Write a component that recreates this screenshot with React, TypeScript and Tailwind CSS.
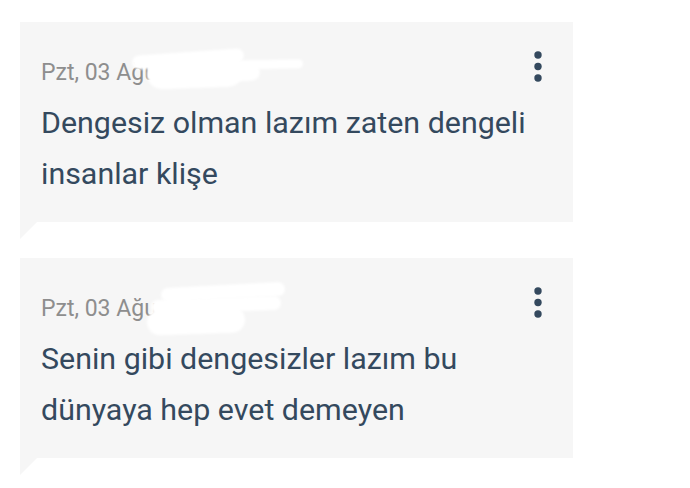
const font = { fontFamily: "Roboto, 'Noto Sans', sans-serif" };

const Dots = () => (
  <svg width="10" height="34" viewBox="0 0 10 34" className="shrink-0">
    <circle cx="5" cy="7" r="3.7" fill="#34495e" />
    <circle cx="5" cy="18.5" r="3.7" fill="#34495e" />
    <circle cx="5" cy="30" r="3.7" fill="#34495e" />
  </svg>
);

type Blob = { l: number; t: number; w: number; h: number; r: number };

const Scribble = ({ blobs }: { blobs: Blob[] }) => (
  <>
    {blobs.map((b, i) => (
      <div
        key={i}
        className="absolute rounded-full bg-white blur-[1px]"
        style={{ left: b.l, top: b.t, width: b.w, height: b.h, transform: `rotate(${b.r}deg)` }}
      />
    ))}
  </>
);

const Comment = ({ lines, blobs }: { lines: string[]; blobs: Blob[] }) => (
  <div className="relative h-[200px] w-[553px] bg-[#f6f6f6]">
    <div className="flex items-start justify-between pt-[26px] pr-[30px] pl-[21px]">
      <div className="mt-[10px] text-[23px] leading-[30px] text-[#8e8e8e]">Pzt, 03 Ağu</div>
      <Dots />
    </div>
    <div className="mt-[9px] pl-[21px] text-[30.4px] leading-[51px] text-[#34495e]">
      {lines.map((l) => (
        <div key={l}>{l}</div>
      ))}
    </div>
    <Scribble blobs={blobs} />
    <div className="absolute top-full left-0 h-[17px] w-[17px] bg-[#f6f6f6] [clip-path:polygon(0_0,100%_0,0_100%)]" />
  </div>
);

export default function App() {
  return (
    <main className="flex min-h-[488px] w-[690px] flex-col gap-[36px] bg-white pt-[22px] pl-[20px]" style={font}>
      <Comment
        lines={["Dengesiz olman lazım zaten dengeli", "insanlar klişe"]}
        blobs={[
          { l: 112, t: 30, w: 112, h: 14, r: -4 },
          { l: 127, t: 36, w: 96, h: 30, r: -2 },
          { l: 195, t: 38, w: 88, h: 9, r: -1 },
          { l: 170, t: 43, w: 70, h: 17, r: -3 },
        ]}
      />
      <Comment
        lines={["Senin gibi dengesizler lazım bu", "dünyaya hep evet demeyen"]}
        blobs={[
          { l: 141, t: 27, w: 124, h: 14, r: -3 },
          { l: 131, t: 40, w: 130, h: 14, r: -2 },
          { l: 127, t: 50, w: 98, h: 26, r: -2 },
        ]}
      />
    </main>
  );
}
